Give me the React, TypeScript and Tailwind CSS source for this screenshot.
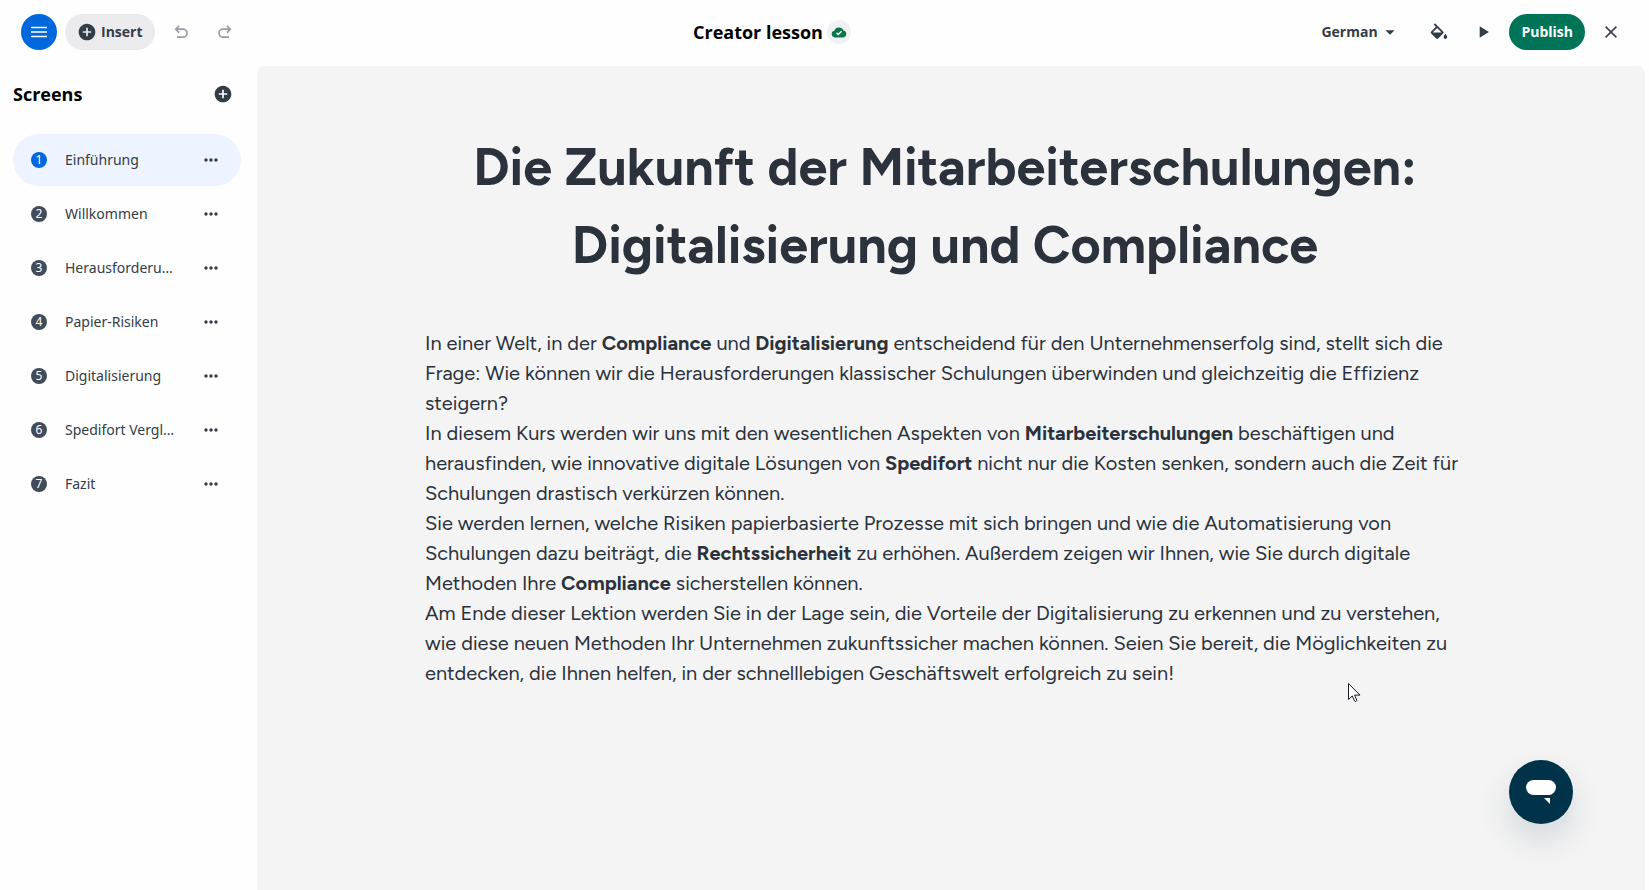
import { MdAddCircle, MdArrowDropDown, MdMoreHoriz, MdPlayArrow } from 'react-icons/md';

interface Screen {
  id: number;
  title: string;
}

const screens: Screen[] = [
  { id: 1, title: 'Einführung' },
  { id: 2, title: 'Willkommen' },
  { id: 3, title: 'Herausforderungen' },
  { id: 4, title: 'Papier-Risiken' },
  { id: 5, title: 'Digitalisierung' },
  { id: 6, title: 'Spedifort Vergleich' },
  { id: 7, title: 'Fazit' },
];

function UndoIcon({ className = '' }: { className?: string }) {
  return (
    <svg className={className} width="16" height="16" viewBox="0 0 16 16" fill="none" stroke="currentColor" strokeWidth="1.7">
      <path d="M6 1.8 2.8 5.2 6 8.6" />
      <path d="M2.8 5.2H10a4 4 0 0 1 0 8H4" />
    </svg>
  );
}

function Header() {
  return (
    <header className="flex h-[66px] items-center justify-between pl-[21px] pr-5 pb-0.5">
      <div className="flex items-center gap-2">
        <button aria-label="Menu" className="flex size-9 items-center justify-center rounded-full bg-[#0068dd] text-white">
          <svg width="16" height="12" viewBox="0 0 16 12" stroke="currentColor" strokeWidth="1.5">
            <path d="M0 1.5h16M0 6h16M0 10.5h16" />
          </svg>
        </button>
        <button className="flex h-9 items-center gap-1 rounded-full bg-[#ebebed] px-3 text-sm font-bold">
          <MdAddCircle size={20} />
          Insert
        </button>
        <button aria-label="Undo" className="flex size-9 items-center justify-center text-[#989ca3]">
          <UndoIcon />
        </button>
        <button aria-label="Redo" className="flex size-9 items-center justify-center text-[#989ca3]">
          <UndoIcon className="-scale-x-100" />
        </button>
      </div>

      <div className="mr-1 flex items-center gap-1">
        <h1 className="text-lg font-bold text-black">Creator lesson</h1>
        <span className="flex size-6 items-center justify-center rounded-full bg-[#eff2f2]">
          <svg width="16" height="12" viewBox="0 0 16 12">
            <path
              d="M4 11.4A3.4 3.4 0 0 1 3.3 4.7 4.9 4.9 0 0 1 12.5 4.5 3.5 3.5 0 0 1 12.2 11.4Z"
              fill="#0b7449"
            />
            <path d="m5.4 6.7 1.8 1.8 3.3-3.3" fill="none" stroke="#fff" strokeWidth="1.3" />
          </svg>
        </span>
      </div>

      <div className="flex items-center gap-2">
        <label className="relative flex h-9 items-center">
          <select
            aria-label="Language"
            className="h-9 w-[108px] appearance-none bg-transparent pl-4 text-sm font-bold"
            defaultValue="de"
          >
            <option value="de">German</option>
            <option value="en">English</option>
          </select>
          <MdArrowDropDown size={22} className="pointer-events-none absolute right-3" />
        </label>
        <button aria-label="Theme" className="flex size-9 items-center justify-center">
          <svg width="22" height="22" viewBox="0 0 24 24" fill="currentColor">
            <path d="M16.56 11.44 7.62 2.5 6.21 3.91l2.38 2.38-5.15 5.15c-.59.59-.59 1.54 0 2.12l5.5 5.5c.29.29.68.44 1.06.44s.77-.15 1.06-.44l5.5-5.5c.59-.58.59-1.53 0-2.12zM5.21 12.5 10 7.71l4.79 4.79H5.21zM19 14s-2 2.17-2 3.5c0 1.1.9 2 2 2s2-.9 2-2c0-1.33-2-3.5-2-3.5z" />
          </svg>
        </button>
        <button aria-label="Preview" className="flex size-9 items-center justify-center">
          <MdPlayArrow size={20} />
        </button>
        <button className="h-9 rounded-full bg-[#007457] px-3 text-sm font-bold text-white">Publish</button>
        <button aria-label="Close" className="flex size-9 items-center justify-center">
          <svg width="12" height="12" viewBox="0 0 12 12" stroke="currentColor" strokeWidth="1.5">
            <path d="m.6.6 10.8 10.8M11.4.6.6 11.4" />
          </svg>
        </button>
      </div>
    </header>
  );
}

function Sidebar() {
  const activeId = 1;

  return (
    <aside className="w-[257px] shrink-0 pl-[13px] pr-4 pt-2">
      <div className="mb-5 flex h-10 items-center justify-between pr-2">
        <h2 className="text-lg font-bold text-black">Screens</h2>
        <button aria-label="Add screen">
          <MdAddCircle size={20} />
        </button>
      </div>
      <ul className="flex flex-col gap-0.5 font-['Noto_Sans',sans-serif]">
        {screens.map((screen) => (
          <li
            key={screen.id}
            className={`flex h-[52px] items-center rounded-full pl-[18px] pr-5 ${screen.id === activeId ? 'bg-[#edf4ff]' : ''}`}
          >
            <span
              className={`flex size-4 shrink-0 items-center justify-center rounded-full text-xs text-white ${
                screen.id === activeId ? 'bg-[#0068dd]' : 'bg-[#414b59]'
              }`}
            >
              {screen.id}
            </span>
            <a href={`#screen-${screen.id}`} className="ml-[18px] w-[110px] truncate text-sm">
              {screen.title}
            </a>
            <button aria-label={`Options for ${screen.title}`} className="ml-auto">
              <MdMoreHoriz size={20} />
            </button>
          </li>
        ))}
      </ul>
    </aside>
  );
}

function Lesson() {
  return (
    <main className="flex-1 rounded-t-lg bg-[#f4f4f4] pr-3 pt-[62px] text-[#2b323c] font-['Figtree','Lato',sans-serif]">
      <article className="mx-auto max-w-[1040px]">
        <h2 className="text-center text-[52px] leading-[78px] font-bold">
          Die Zukunft der Mitarbeiterschulungen: Digitalisierung und Compliance
        </h2>
        <div className="mt-11 text-xl leading-[30px]">
          <p>
            In einer Welt, in der <strong>Compliance</strong> und <strong>Digitalisierung</strong> entscheidend für den
            Unternehmenserfolg sind, stellt sich die Frage: Wie können wir die Herausforderungen klassischer Schulungen
            überwinden und gleichzeitig die Effizienz steigern?
          </p>
          <p>
            In diesem Kurs werden wir uns mit den wesentlichen Aspekten von <strong>Mitarbeiterschulungen</strong>{' '}
            beschäftigen und herausfinden, wie innovative digitale Lösungen von <strong>Spedifort</strong> nicht nur die
            Kosten senken, sondern auch die Zeit für Schulungen drastisch verkürzen können.
          </p>
          <p>
            Sie werden lernen, welche Risiken papierbasierte Prozesse mit sich bringen und wie die Automatisierung von
            Schulungen dazu beiträgt, die <strong>Rechtssicherheit</strong> zu erhöhen. Außerdem zeigen wir Ihnen, wie Sie
            durch digitale Methoden Ihre <strong>Compliance</strong> sicherstellen können.
          </p>
          <p>
            Am Ende dieser Lektion werden Sie in der Lage sein, die Vorteile der Digitalisierung zu erkennen und zu
            verstehen, wie diese neuen Methoden Ihr Unternehmen zukunftssicher machen können. Seien Sie bereit, die
            Möglichkeiten zu entdecken, die Ihnen helfen, in der schnelllebigen Geschäftswelt erfolgreich zu sein!
          </p>
        </div>
      </article>
    </main>
  );
}

export default function App() {
  return (
    <div className="flex min-h-screen flex-col bg-[#fefefe] text-[#333c47] font-['Open_Sans','Noto_Sans',sans-serif]">
      <Header />
      <div className="flex flex-1 pr-1">
        <Sidebar />
        <Lesson />
      </div>

      {/* Chat launcher */}
      <button
        aria-label="Open chat"
        className="fixed right-[76px] bottom-[66px] flex size-16 items-center justify-center rounded-full bg-[#003349] shadow-[0_16px_32px_rgba(0,51,73,0.14)]"
      >
        <svg width="30" height="26" viewBox="0 0 30 26" fill="#fff">
          <rect y="1" width="30" height="15" rx="7.5" />
          <path d="M18 19h6v6Z" />
        </svg>
      </button>

      {/* Mouse pointer */}
      <svg
        className="pointer-events-none fixed top-[683px] left-[1348px]"
        width="13"
        height="20"
        viewBox="0 0 13 20"
        fill="#fff"
        stroke="#1b1b22"
        strokeLinejoin="round"
      >
        <path d="M.5.5v16l3.7-3.6 2.4 5.2c.7.9 2.4.2 2.2-.9l-2.2-5.1H12Z" />
      </svg>
    </div>
  );
}
